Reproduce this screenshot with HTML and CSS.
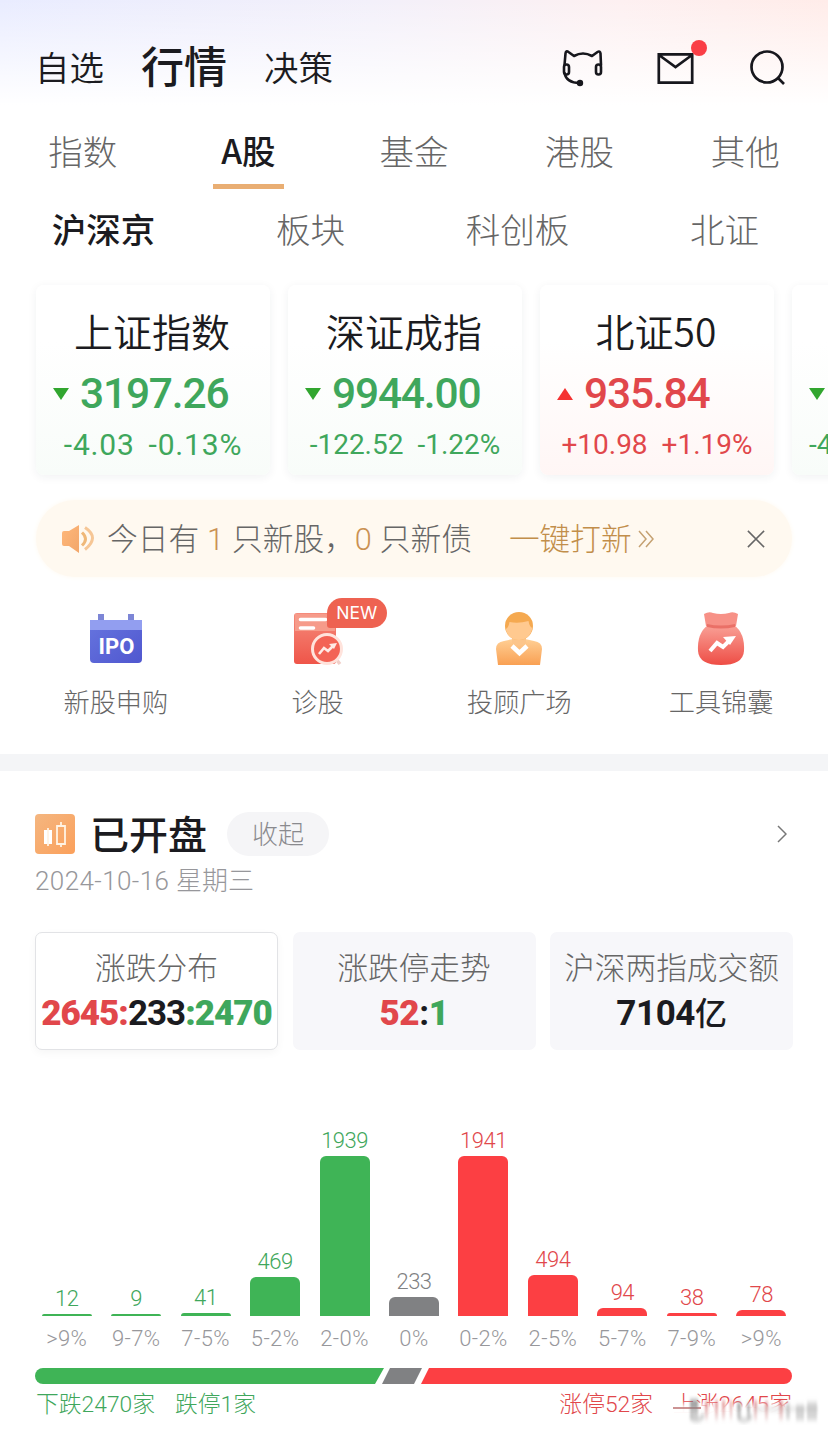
FILE: index.html
```html
<!DOCTYPE html>
<html lang="zh-CN">
<head>
<meta charset="utf-8">
<title>行情</title>
<link rel="stylesheet" href="styles.css">
</head>
<body>
<div class="app">
  <header class="top">
    <nav class="modes"><span class="mode">自选</span><span class="mode current">行情</span><span class="mode">决策</span></nav>
    <div class="actions">
      <svg class="ico-cat" viewBox="0 0 42 38" fill="none" stroke="#17171d" stroke-width="2.6" stroke-linejoin="round" stroke-linecap="round"><path d="M2.500 16 3.500 4.500q.5-3.500 3-1.500L12 7q9-5 18 0l5.500-4q2.500-1.500 3 1.500L39 16"/><rect x="2" y="15.500" width="5" height="10" rx="2.500"/><rect x="34" y="15.500" width="5" height="10" rx="2.500"/><path d="M2.500 24q2 10 15 10"/><circle cx="18" cy="34" r="1.900" fill="#17171d"/></svg>
      <span class="mail"><svg viewBox="0 0 36 31" fill="none" stroke="#17171d" stroke-width="2.700"><path d="M1.300 1.300h33.400v28.400H1.300zM1.500 2 18 14 34.500 2"/></svg><i class="dot"></i></span>
      <svg class="ico-search" viewBox="0 0 38 38" fill="none" stroke="#17171d" stroke-width="2.700"><circle cx="18" cy="18" r="15.500"/><path d="m28.500 28.500 6.500 6.500"/></svg>
    </div>
  </header>
  <nav class="markets"><span>指数</span><span class="on">A股</span><span>基金</span><span>港股</span><span>其他</span></nav>
  <nav class="boards"><span class="on">沪深京</span><span>板块</span><span>科创板</span><span>北证</span></nav>

  <section class="indices">
    <article class="card down"><h3>上证指数</h3><p class="value"><i class="tri"></i>3197.26</p><p class="change large"><span>-4.03</span><span>-0.13%</span></p></article>
    <article class="card down"><h3>深证成指</h3><p class="value"><i class="tri"></i>9944.00</p><p class="change"><span>-122.52</span><span>-1.22%</span></p></article>
    <article class="card up"><h3>北证50</h3><p class="value"><i class="tri"></i>935.84</p><p class="change"><span>+10.98</span><span>+1.19%</span></p></article>
    <article class="card down"><h3></h3><p class="value"><i class="tri"></i></p><p class="change cut"><span>-4</span></p></article>
  </section>

  <section class="notice">
    <svg class="speaker" viewBox="0 0 34 30"><defs><linearGradient id="sp" x2="1" y2="1"><stop stop-color="#ffb87a"/><stop offset="1" stop-color="#f2a66a"/></linearGradient></defs><path d="M1 9q0-2 2-2h5L18 1v28L8 22H3q-2 0-2-2z" fill="url(#sp)"/><path d="M21 8.500q7 6.500 0 13" fill="none" stroke="#efb878" stroke-width="3"/><path d="M24 3.500q15 10 0 22" fill="none" stroke="#f6c695" stroke-width="3"/></svg>
    <span class="say">今日有<b>1</b>只新股，</span><span class="say second"><b>0</b>只新债</span>
    <span class="go">一键打新</span>
    <svg class="more" viewBox="0 0 16 18" fill="none" stroke="#c5a171" stroke-width="1.500"><path d="m1 1 7 8-7 8M8 1l7 8-7 8"/></svg>
    <svg class="close" viewBox="0 0 20 20" fill="none" stroke="#666" stroke-width="1.700"><path d="m1 1 18 18M19 1 1 19"/></svg>
  </section>

  <section class="tools">
    <div class="tool"><svg viewBox="0 0 54 54"><defs><linearGradient id="bl" x2="1" y2="1"><stop stop-color="#6675df"/><stop offset="1" stop-color="#5057cf"/></linearGradient></defs><path d="M9 2h6v8H9zM39 2h6v8h-6z" fill="#7d86d6"/><path d="M1 8h52v39q0 4-4 4H5q-4 0-4-4z" fill="url(#bl)"/><path d="M1 8h52v10H1z" fill="#929ef0"/><text x="27.500" y="41.500" text-anchor="middle" class="ipo">IPO</text></svg><span>新股申购</span></div>
    <div class="tool"><svg viewBox="0 0 54 54"><defs><linearGradient id="rd" x2="0" y2="1"><stop stop-color="#f58b7b"/><stop offset="1" stop-color="#ef5549"/></linearGradient></defs><rect x="3" y="1" width="42" height="51" rx="3" fill="url(#rd)"/><path d="M4 2h40v17H4z" fill="#f69b8a"/><path d="M9.500 7.500h25M9.500 16h13" stroke="#fff" stroke-width="3.600" stroke-linecap="round"/><path d="m44 46 5 6" stroke="#f0cfc8" stroke-width="3.500"/><circle cx="36" cy="37" r="14.500" fill="#f36355" stroke="#ffe3dc" stroke-width="3"/><path d="m28 42 5-6 4 3 6-6" fill="none" stroke="#ffe9e4" stroke-width="2.600"/><path d="m38 32 8-1-3 6z" fill="#ffe9e4"/></svg><em class="new">NEW</em><span>诊股</span></div>
    <div class="tool"><svg viewBox="0 0 54 54"><defs><linearGradient id="og" x2="0" y2="1"><stop stop-color="#ffcf94"/><stop offset="1" stop-color="#f9a053"/></linearGradient></defs><path d="M6 53 4 37q0-7 8-8l9-2h12l9 2q8 1 8 8l-2 16z" fill="url(#og)"/><path d="M20 22h14v9q-7 5-14 0z" fill="#fcc58a"/><ellipse cx="27" cy="14" rx="14" ry="14" fill="#f5a950"/><path d="M13.500 17q3-1 4-7 9 2 19-1 1 6 4 7-3 12-13.500 12T13.500 17z" fill="#ffc98f"/><path d="m20 34 7.500 7 7.500-7" fill="none" stroke="#fff" stroke-width="4.600"/></svg><span>投顾广场</span></div>
    <div class="tool"><svg viewBox="0 0 54 54"><defs><linearGradient id="bag" x2="0" y2="1"><stop stop-color="#f9a197"/><stop offset="1" stop-color="#ee4d45"/></linearGradient></defs><path d="M14 13q-11 8-10 26 1 14 23 14t23-14q1-18-10-26z" fill="url(#bag)"/><path d="M10 2q5-3 9-1 8 2 16 0 4-2 9 1l-2 12q-15 3-30 0z" fill="#f79187"/><path d="M13 12q14 3 28 0v3q-14 3-28 0z" fill="#ea7067"/><path d="m16 39 7-8 6 4 8-8" fill="none" stroke="#fff" stroke-width="4"/><path d="m29 25 13-1-6 9z" fill="#fff"/></svg><span>工具锦囊</span></div>
  </section>
  <div class="divider"></div>

  <section class="status">
    <div class="heading">
      <svg class="badge" viewBox="0 0 40 40"><defs><linearGradient id="bd" x2="1" y2="1"><stop stop-color="#f4b680"/><stop offset="1" stop-color="#fba05b"/></linearGradient></defs><rect width="40" height="40" rx="4" fill="url(#bd)"/><path d="M9 16h8v14H9z" fill="#fff"/><path d="M13 14v18M26 8v4m0 18v3M22 12h8v18h-8z" fill="none" stroke="#fff3e4" stroke-width="1.800"/></svg>
      <h2>已开盘</h2><button class="fold">收起</button>
      <svg class="chev" viewBox="0 0 10 18" fill="none" stroke="#777" stroke-width="1.500"><path d="m1 1 8 8-8 8"/></svg>
    </div>
    <p class="date">2024-10-16 <span>星期三</span></p>
    <div class="stats">
      <div class="stat selected"><span>涨跌分布</span><strong><b class="r">2645:</b>233<b class="g">:2470</b></strong></div>
      <div class="stat"><span>涨跌停走势</span><strong><b class="r">52</b>:<b class="g">1</b></strong></div>
      <div class="stat"><span>沪深两指成交额</span><strong>7104<small>亿</small></strong></div>
    </div>
  </section>

  <section class="chart">
    <div class="col g"><span>12</span><i style="height:2px"></i><em>&gt;9%</em></div>
    <div class="col g"><span>9</span><i style="height:2px"></i><em>9-7%</em></div>
    <div class="col g"><span>41</span><i style="height:3px"></i><em>7-5%</em></div>
    <div class="col g"><span>469</span><i style="height:39px"></i><em>5-2%</em></div>
    <div class="col g"><span>1939</span><i style="height:160px"></i><em>2-0%</em></div>
    <div class="col n"><span>233</span><i style="height:19px"></i><em>0%</em></div>
    <div class="col r"><span>1941</span><i style="height:160px"></i><em>0-2%</em></div>
    <div class="col r"><span>494</span><i style="height:41px"></i><em>2-5%</em></div>
    <div class="col r"><span>94</span><i style="height:8px"></i><em>5-7%</em></div>
    <div class="col r"><span>38</span><i style="height:3px"></i><em>7-9%</em></div>
    <div class="col r"><span>78</span><i style="height:6px"></i><em>&gt;9%</em></div>
  </section>
  <svg class="ratio" viewBox="0 0 757 16"><path d="M8 0h341l-9 16H8A8 8 0 0 1 8 0z" fill="#3fb456"/><path d="M355 0h32l-8 16h-32z" fill="#808183"/><path d="M394 0h355a8 8 0 0 1 0 16H386z" fill="#fc3f43"/></svg>
  <footer class="totals">
    <span class="g">下跌2470家</span><span class="g">跌停1家</span><span class="r limit">涨停52家</span><span class="r rise">上涨2645家</span>
    <svg class="smear" viewBox="0 0 170 44"><defs><filter id="soft" x="-20%" y="-20%" width="140%" height="140%"><feGaussianBlur stdDeviation="1.100 2.500"/></filter><linearGradient id="fade" x2="0" y2="1"><stop stop-color="#fff" stop-opacity="0"/><stop offset=".25" stop-color="#fff" stop-opacity=".96"/><stop offset="1" stop-color="#fff"/></linearGradient><linearGradient id="gray" x2="0" y2="1"><stop stop-color="#666" stop-opacity=".75"/><stop offset="1" stop-color="#aaa" stop-opacity=".4"/></linearGradient><linearGradient id="rose" x2="0" y2="1"><stop stop-color="#d65353" stop-opacity=".7"/><stop offset="1" stop-color="#c99" stop-opacity=".25"/></linearGradient></defs><rect y="13" x="14" width="156" height="31" fill="url(#fade)"/><path d="M15 21h28" stroke="#b05a5a" stroke-width="1.300"/><g filter="url(#soft)"><path d="M32 13h8v19h-8zM79 16h4v16h-4zM89 17h3v15h-3z" fill="url(#gray)"/><path d="M47 14h3v18h-3zM57 14h3v19h-3zM64 14h3v18h-3zM72 14h2v18h-2zM96 14h3v19h-3zM107 15h3v18h-3zM121 14h4v19h-4z" fill="url(#rose)"/><path d="M32 30q7 7 14-2M80 30q6 7 14-1" fill="none" stroke="#999" stroke-opacity=".6" stroke-width="3"/><path d="M96 22h64" stroke="#aaa" stroke-opacity=".4" stroke-width="3"/><path d="M128 16h4v16h-4zM138 18h8v15h-8zM149 15h10v18h-10z" fill="#999" fill-opacity=".4"/></g></svg>
  </footer>
</div>
</body>
</html>
```

FILE: styles.css
```css
* { box-sizing: border-box; }
body { margin: 0; background: #fff; color: #1b1b20; font-family: "Noto Sans CJK SC", sans-serif; font-weight: 300; }
h2, h3, p { margin: 0; }
i, em { font-style: normal; }
svg { display: block; flex: none; }
.app { width: 828px; height: 1435px; overflow: hidden; background: linear-gradient(#fff0 0, #fff 105px), linear-gradient(90deg, #e9ecff 0, #f3f0fa 45%, #fdf0f1 75%, #ffece9 100%); }
.r { color: #e1474b; }
.g { color: #3fa75c; }

.top { height: 112px; padding: 0 41px 0 35px; display: flex; justify-content: space-between; align-items: center; }
.modes { display: flex; align-items: center; height: 50px; margin-top: 20px; font-size: 34.500px; line-height: 50px; font-weight: 350; }
.mode.current { font-size: 43px; font-weight: 500; margin: -5px 37px 0; }
.actions { display: flex; align-items: center; margin-top: 24px; }
.ico-cat { width: 42px; height: 38px; }
.mail { position: relative; margin-left: 53px; }
.mail svg { width: 37px; height: 31px; }
.dot { position: absolute; width: 16px; height: 16px; border-radius: 50%; background: #fa3e46; left: 34px; top: -13px; }
.ico-search { width: 38px; height: 38px; margin-left: 55px; }

.markets { height: 77px; display: grid; grid-template-columns: repeat(5, 1fr); }
.markets span, .boards span { display: flex; justify-content: center; font-size: 34.500px; line-height: 76px; color: #666; }
.markets span.on, .boards span.on { color: #1b1b20; font-weight: 500; }
.markets span.on { font-size: 33.500px; width: 71px; height: 77px; justify-self: center; border-bottom: 5px solid #e9ae73; }
.boards { height: 80px; display: grid; grid-template-columns: repeat(4, 1fr); }
.boards span { line-height: 78px; }

.indices { display: flex; gap: 18px; margin-top: 16px; padding-left: 36px; }
.card { flex: none; width: 234px; height: 190px; border-radius: 8px; padding-top: 18px; box-shadow: 0 2px 10px #20304010; }
.card h3 { height: 58px; line-height: 54px; font-size: 39px; font-weight: 350; text-align: center; margin-left: -2px; color: #1b1b20; }
.down { background: linear-gradient(#fff 30%, #f8fcf9); color: #3fa75c; }
.up { background: linear-gradient(#fff 30%, #fff6f5); color: #e1474b; }
.value { display: flex; align-items: center; height: 66px; padding-left: 17px; font: 500 42.500px/66px Roboto, sans-serif; letter-spacing: -1.200px; }
.tri { width: 0; height: 0; border: 8px solid transparent; border-bottom: 0; border-top: 12px solid #31a62f; margin-right: 11px; }
.up .tri { border-top: 0; border-bottom: 12px solid #f53232; }
.change { display: flex; justify-content: center; gap: 14px; font: 400 28px/36px Roboto, sans-serif; }
.change.large { font-size: 30px; letter-spacing: .8px; }
.change.cut { justify-content: flex-start; padding-left: 17px; }

.notice { margin: 25px 36px 0; height: 77px; border-radius: 39px; background: #fff9f0; display: flex; align-items: center; padding: 0 27px 0 25px; font-size: 30.700px; color: #666; box-shadow: 0 0 5px #fff9f0; }
.speaker { width: 34px; height: 30px; margin-right: 12px; }
.say, .go { line-height: 44px; margin-top: -4px; white-space: nowrap; }
.say b { display: inline-block; line-height: 30px; font-family: Roboto, sans-serif; font-weight: 300; color: #ca9153; width: 33px; text-align: center; }
.second { margin-left: -8px; }
.go { color: #c28e4a; margin-left: 37px; }
.more { width: 16px; height: 18px; margin-left: 6px; }
.close { width: 18px; height: 18px; margin-left: auto; }

.tools { height: 177px; padding: 35px 6px 0 15px; display: grid; grid-template-columns: repeat(4, 1fr); }
.tool { position: relative; display: flex; flex-direction: column; align-items: center; font-size: 26.200px; line-height: 38px; color: #666; }
.tool svg { width: 54px; height: 54px; margin-bottom: 16px; }
.ipo { font: 700 22px Roboto, sans-serif; fill: #fff; letter-spacing: 0; }
.new { position: absolute; left: 110px; top: -14px; width: 60px; height: 30px; border-radius: 15px 15px 15px 3px; background: #ee6251; color: #fff; font: 400 17.500px/30px Inter, sans-serif; text-align: center; }
.divider { height: 17px; background: #f4f5f7; }

.status { padding: 36px 35px 0; }
.heading { height: 54px; display: flex; align-items: center; }
.badge { width: 40px; height: 40px; }
.heading h2 { font-size: 39px; line-height: 54px; font-weight: 500; margin: -4px 0 0 15px; }
.fold { border: 0; width: 102px; height: 44px; border-radius: 22px; margin-left: 20px; padding: 0 0 2px; background: #f5f5f7; color: #8a8a8e; font: 300 26px/42px "Noto Sans CJK SC", sans-serif; }
.chev { width: 10px; height: 18px; margin-left: auto; margin-right: 6px; }
.date { font: 300 26px/40px Roboto, "Noto Sans CJK SC", sans-serif; color: #97979b; letter-spacing: .4px; white-space: pre; }
.date span { letter-spacing: 0; }
.stats { display: grid; grid-template-columns: repeat(3, 243px); gap: 14.500px; margin-top: 31px; }
.stat { height: 118px; border-radius: 7px; background: #f7f7fa; display: flex; flex-direction: column; align-items: center; padding-top: 12px; color: #666; font-size: 30.700px; line-height: 44px; white-space: nowrap; }
.stat.selected { background: #fff; border: 1px solid #e2e3e6; box-shadow: 0 3px 8px #0000000a; padding-top: 11px; }
.stat strong { height: 48px; margin-top: 2px; font: 700 35px/48px Roboto, "Noto Sans CJK SC", sans-serif; color: #1b1b20; letter-spacing: -1px; }
.stat:not(.selected) strong { letter-spacing: -.4px; }
.stat small { font: 500 32px/30px "Noto Sans CJK SC", sans-serif; }

.chart { height: 303px; padding: 0 32px; display: grid; grid-template-columns: repeat(11, 1fr); align-items: end; }
.col { display: flex; flex-direction: column; align-items: center; font: 300 22px/28px Roboto, sans-serif; }
.col i { width: 50px; background: currentColor; border-radius: 6px 6px 0 0; margin-top: 1px; }
.col span { letter-spacing: -.5px; }
.col.g i { background: #3fb456; }
.col.r i { background: #fc3f43; }
.col.n { color: #808183; }
.col em { margin-top: 9px; color: #97979b; letter-spacing: .4px; }
.ratio { width: 757px; height: 16px; margin: 15px 0 0 35px; }
.totals { position: relative; display: flex; padding: 0 36px; margin-top: 3px; font: 300 22.800px/36px Roboto, "Noto Sans CJK SC", sans-serif; gap: 20px; white-space: nowrap; }
.limit { margin-left: auto; }
.smear { position: absolute; left: 658px; top: 0; width: 170px; height: 44px; }
```
